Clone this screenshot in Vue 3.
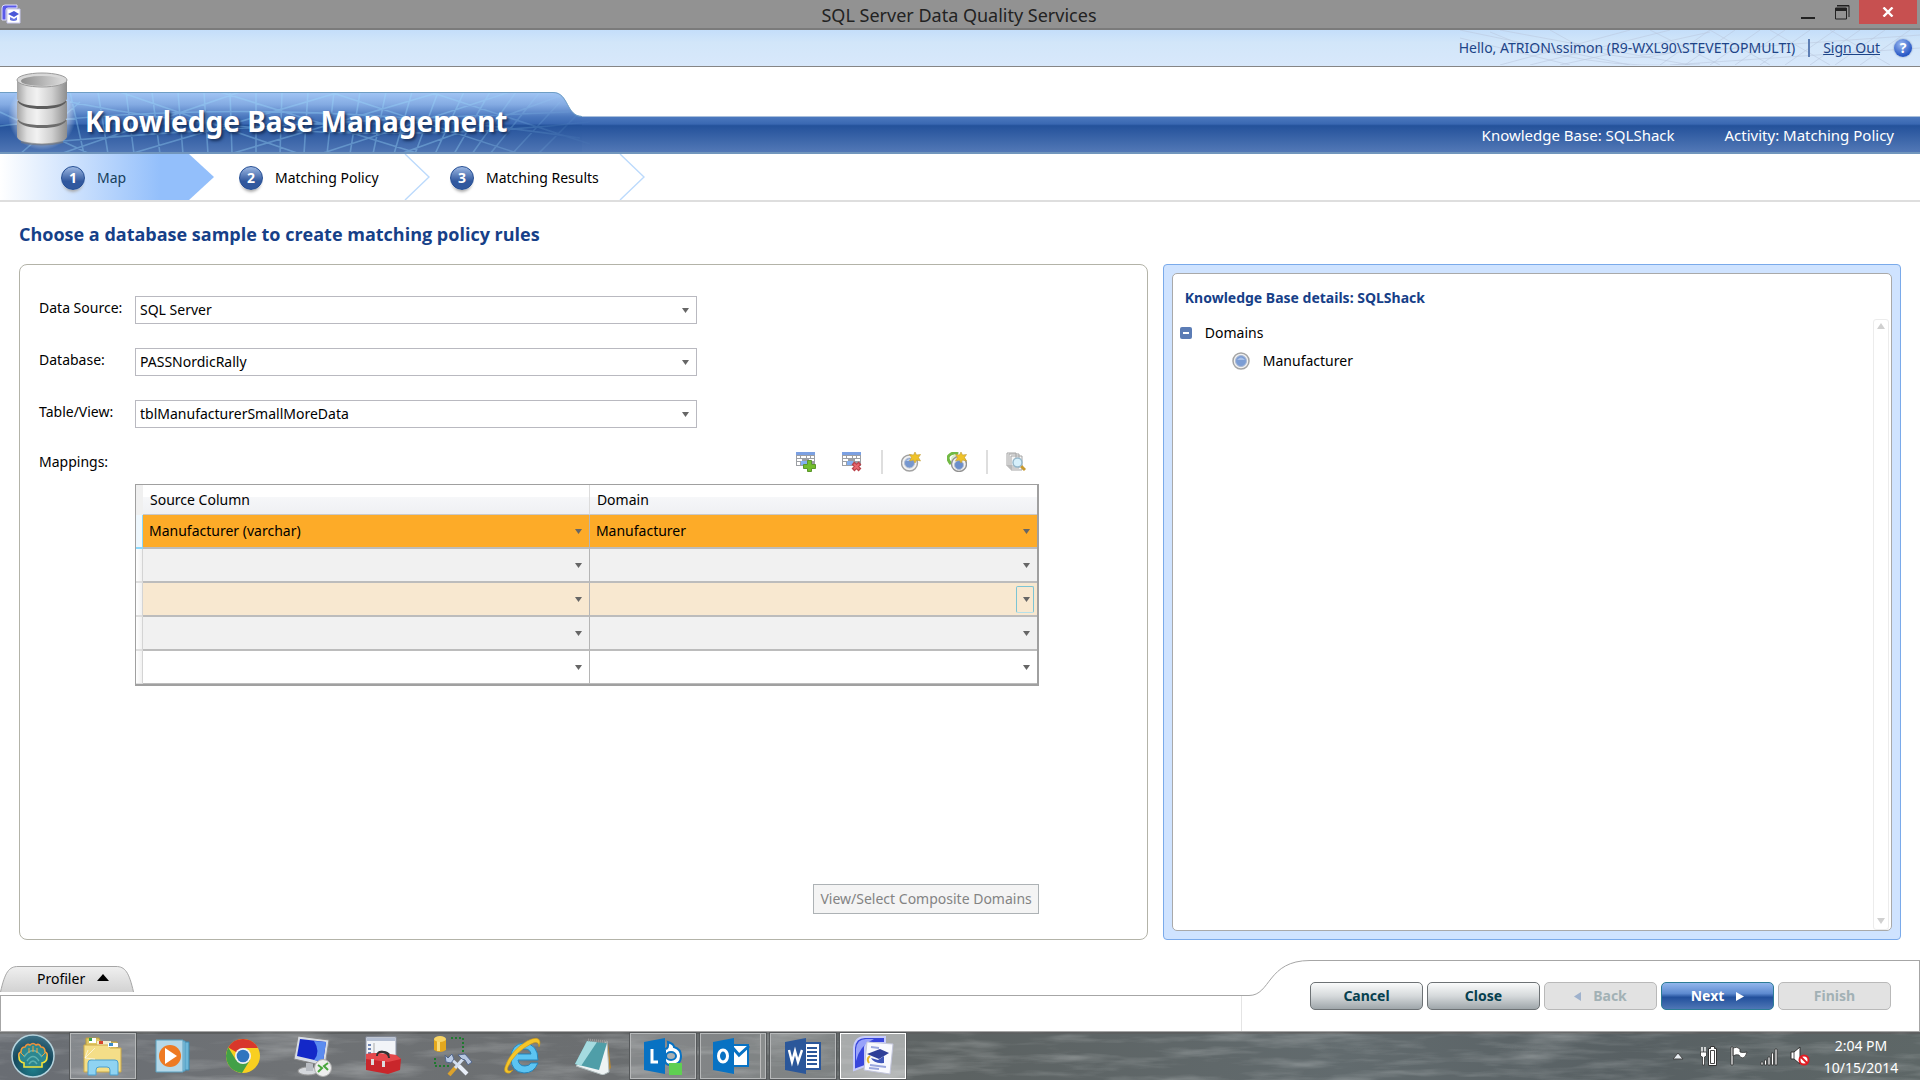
<script setup>
import { ref } from 'vue'

const steps = [
  { number: 1, label: 'Map', active: true },
  { number: 2, label: 'Matching Policy', active: false },
  { number: 3, label: 'Matching Results', active: false }
]

const fields = ref([
  { id: 'data-source', label: 'Data Source:', value: 'SQL Server' },
  { id: 'database', label: 'Database:', value: 'PASSNordicRally' },
  { id: 'table-view', label: 'Table/View:', value: 'tblManufacturerSmallMoreData' }
])

const rows = ref([
  { source: 'Manufacturer (varchar)', domain: 'Manufacturer', state: 'selected' },
  { source: '', domain: '', state: 'alt' },
  { source: '', domain: '', state: 'hover' },
  { source: '', domain: '', state: 'alt' },
  { source: '', domain: '', state: '' }
])

const expanded = ref(true)
</script>

<template>
  <div class="desktop">
    <header class="titlebar">
      <svg class="app-icon" width="20" height="20" viewBox="0 0 20 20">
        <path d="M1 16V4q0-3 3-3h12v3H7q-2 0-2 2v10z" fill="#5a5ae8" stroke="#dcdcff" />
        <path d="M6 5h13v14H6z" fill="#fff" stroke="#c8c8f0" />
        <path d="M7 10l6-3 5 3-5 3z" fill="#4a58d8" />
        <path d="M9 13v3q4 2 7 0v-3l-3 2z" fill="#6a78e0" />
      </svg>
      <h1 class="window-title">SQL Server Data Quality Services</h1>
      <div class="window-buttons">
        <button class="win-btn" aria-label="Minimize">
          <svg width="16" height="16" viewBox="0 0 16 16"><path d="M1 13h14v2H1z" fill="#222" /></svg>
        </button>
        <button class="win-btn" aria-label="Restore">
          <svg width="16" height="16" viewBox="0 0 16 16">
            <path d="M3 1.5h12V13M1.5 4h11v11h-11z" fill="none" stroke="#222" />
            <path d="M3 1h12v1.5H3zM1 4h12v3H1z" fill="#222" />
          </svg>
        </button>
        <button class="win-btn win-close" aria-label="Close window">
          <svg width="12" height="10" viewBox="0 0 12 10"><path d="M1.5 .5l9 9M10.5 .5l-9 9" stroke="#fff" stroke-width="2.4" /></svg>
        </button>
      </div>
    </header>

    <div class="userbar">
      <svg class="userbar-mesh" width="460" height="35" viewBox="0 0 460 35" aria-hidden="true">
        <path d="M0 8L110 35M0 0L170 35M40 0L230 35M40 35L170 0M70 35L210 0M100 35L250 2M30 2q90 40 210 32M90 0q80 50 150 10M200 35L250 0M225 35L275 0M250 35L300 0M275 35L325 0M300 35L350 0M325 35L375 0M350 35L400 0M375 35L425 0M400 35L450 0M190 0L260 35M250 0L310 35M310 0L370 35M370 0L430 35M180 25L460 5M210 35L460 18" fill="none" stroke="#b9c7dc" stroke-opacity=".55" />
      </svg>
      <span>Hello, ATRION\ssimon (R9-WXL90\STEVETOPMULTI)</span>
      <span class="userbar-divider"></span>
      <a href="#" class="sign-out">Sign Out</a>
      <button class="help" aria-label="Help">?</button>
    </div>

    <div class="banner">
      <svg class="banner-tab" width="600" height="62" viewBox="0 0 600 62" aria-hidden="true">
        <defs>
          <linearGradient id="tab-fill" gradientUnits="userSpaceOnUse" x1="0" y1="0" x2="0" y2="62">
            <stop offset="0" stop-color="#a3c6f5" />
            <stop offset=".2" stop-color="#84abe3" />
            <stop offset=".4" stop-color="#4b78be" />
            <stop offset=".51" stop-color="#3a68b2" />
            <stop offset=".54" stop-color="#24529b" />
            <stop offset="1" stop-color="#5278b6" />
          </linearGradient>
          <linearGradient id="fade-right" x1="0" x2="1">
            <stop offset="0" stop-color="#fff" />
            <stop offset=".75" stop-color="#fff" />
            <stop offset="1" stop-color="#000" />
          </linearGradient>
          <mask id="mesh-mask"><rect width="600" height="62" fill="url(#fade-right)" /></mask>
          <clipPath id="tab-clip"><path d="M0 0h553C569 0 566 24 582 24h18v38H0z" /></clipPath>
        </defs>
        <path d="M0 0h553C569 0 566 24 582 24V62H0z" fill="url(#tab-fill)" />
        <g clip-path="url(#tab-clip)" mask="url(#mesh-mask)">
          <path d="M70 0l14 62M98 0l10 62M126 0l8 62M152 0l8 62M178 0l5 62M204 0l4 62M230 0l2 62M256 0v62M282 0l-2 62M308 0l-4 62M334 0l-7 62M360 0l-10 62M386 0l-13 62M412 0l-18 62M438 0l-23 62M464 0l-29 62M490 0l-36 62M516 0l-44 62M540 0l-50 62M560 10l-48 52M580 20l-42 42M60 62L240 0M130 62L340 0M230 62L440 0M320 62L510 0M400 62L560 4M70 10q250 50 520 20M0 34q280 -34 580 12M50 50q240 -20 520 -30M120 0L300 62M220 0L420 62M330 0L520 62M430 0L590 52M0 20L90 62M20 62L80 10" fill="none" stroke="#9fe0ff" stroke-opacity=".34" stroke-width="1.6" />
        </g>
        <path d="M0 60h582v2H0z" fill="#7196bd" />
        <path d="M0 .5h553C569 .5 566 24.5 582 24.5" fill="none" stroke="#6f9ec4" />
      </svg>
      <svg class="db-icon" width="68" height="84" viewBox="0 3 68 84" aria-hidden="true">
        <defs>
          <linearGradient id="metal" x1="0" x2="1">
            <stop offset="0" stop-color="#a4a4a4" />
            <stop offset=".2" stop-color="#dedede" />
            <stop offset=".4" stop-color="#f2f2f2" />
            <stop offset=".7" stop-color="#cfcfcf" />
            <stop offset="1" stop-color="#8d8d8d" />
          </linearGradient>
          <linearGradient id="metal-top" x1="0" x2="1">
            <stop offset="0" stop-color="#8f8f8f" />
            <stop offset="1" stop-color="#dadada" />
          </linearGradient>
          <radialGradient id="glow">
            <stop offset=".5" stop-color="#fff" stop-opacity=".9" />
            <stop offset="1" stop-color="#fff" stop-opacity="0" />
          </radialGradient>
        </defs>
        <ellipse cx="34" cy="52" rx="34" ry="34" fill="url(#glow)" />
        <path d="M9 56v17q3 7 25 7t25-7V56z" fill="url(#metal)" />
        <path d="M10 57q5 7 24 7t24-7v-4H10z" fill="#6c6c6c" />
        <path d="M9 37v17q3 7 25 7t25-7V37z" fill="url(#metal)" />
        <path d="M10 38q5 7 24 7t24-7v-4H10z" fill="#5c5c5c" />
        <path d="M9 16v19q3 7 25 7t25-7V16z" fill="url(#metal)" />
        <ellipse cx="34" cy="16" rx="25" ry="7" fill="#d8d8d8" stroke="#9b9b9b" />
        <ellipse cx="34" cy="17" rx="21" ry="5" fill="url(#metal-top)" />
        <path d="M13 78q21 5 42 0" fill="none" stroke="#777" stroke-opacity=".6" stroke-width="2" />
      </svg>
      <div class="banner-strip">
        <h2 class="banner-title">Knowledge Base Management</h2>
        <p class="banner-info">
          <span>Knowledge Base: SQLShack</span>
          <span>Activity: Matching Policy</span>
        </p>
      </div>
    </div>

    <nav class="steps">
      <a v-for="step in steps" :key="step.number" href="#" class="step" :class="{ active: step.active }">
        <span class="step-number">{{ step.number }}</span>
        <span>{{ step.label }}</span>
        <svg class="step-arrow" width="26" height="46" viewBox="0 0 26 46" aria-hidden="true">
          <path v-if="step.active" d="M0 0l25 23L0 46z" fill="#93bffb" />
          <path v-else d="M1 0l24 23L1 46" fill="none" stroke="#bcdafc" stroke-width="1.4" />
        </svg>
      </a>
    </nav>

    <main class="content">
      <h3 class="page-heading">Choose a database sample to create matching policy rules</h3>
      <div class="panels">
        <section class="form-panel">
          <div v-for="field in fields" :key="field.id" class="field">
            <label :for="field.id">{{ field.label }}</label>
            <select :id="field.id" class="dropdown">
              <option>{{ field.value }}</option>
            </select>
          </div>

          <div class="mappings-head">
            <span>Mappings:</span>
            <div class="toolbar">
              <button class="tool" aria-label="Add mapping">
                <svg width="20" height="20" viewBox="0 0 20 20">
                  <path d="M0 0h19v14H0z" fill="#9c9fa4" />
                  <path d="M0 0h19v3H0z" fill="#7ba0e2" />
                  <path d="M1 4h3v2H1zM5 4h5v2H5zM11 4h3v2h-3zM15 4h3v2h-3zM1 7h5v2H1zM13 7h5v2h-5zM1 10h3v3H1zM11 10h5v3h-5z" fill="#fff" />
                  <path d="M5 9h6v4H5z" fill="#83aff0" />
                  <path d="M11.5 8.5h4v4h4v4h-4v3h-4v-3h-4v-4h4z" fill="#72bd2c" stroke="#5b962c" />
                </svg>
              </button>
              <button class="tool" aria-label="Remove mapping">
                <svg width="20" height="20" viewBox="0 0 20 20">
                  <path d="M0 0h19v14H0z" fill="#9c9fa4" />
                  <path d="M0 0h19v3H0z" fill="#7ba0e2" />
                  <path d="M1 4h3v2H1zM5 4h5v2H5zM11 4h3v2h-3zM15 4h3v2h-3zM1 7h5v2H1zM13 7h5v2h-5zM1 10h3v3H1z" fill="#fff" />
                  <path d="M5 9h6v4H5z" fill="#83aff0" />
                  <path d="M11 11l7 7M18 11l-7 7" stroke="#b94048" stroke-width="4" />
                  <path d="M12 12l5 5M17 12l-5 5" stroke="#e8666c" stroke-width="2" />
                </svg>
              </button>
              <span class="tool-separator"></span>
              <button class="tool" aria-label="Create a domain">
                <svg width="20" height="20" viewBox="0 0 20 20">
                  <circle cx="8.500" cy="11" r="8" fill="#f2f2f2" stroke="#a2a2a2" stroke-width="1.4" />
                  <circle cx="8.500" cy="11" r="5" fill="#7697cf" stroke="#b4bfd3" />
                  <path d="M5 9q3-4 7 0z" fill="#b9cdec" />
                  <path d="M14 0l1.5 3 4-.5-2 3 2 3.500-4-1L14 11l-1.500-3-4 1 2-3.500-2-3 4 .5z" fill="#efc229" stroke="#c09a35" stroke-width=".6" />
                </svg>
              </button>
              <button class="tool" aria-label="Create a composite domain">
                <svg width="20" height="20" viewBox="0 0 20 20">
                  <path d="M4 12Q-2 5 4 2q4-2 7 0" fill="none" stroke="#72b944" stroke-width="3" />
                  <path d="M6 10Q3 5 9 3" fill="none" stroke="#d9efca" stroke-width="2" />
                  <circle cx="12" cy="12" r="7.500" fill="#f2f2f2" stroke="#929292" stroke-width="1.4" />
                  <circle cx="12" cy="13" r="4.500" fill="#6b8ecb" stroke="#b4bfd3" />
                  <path d="M14 0l1.5 3 4-.5-2 3 2 3.500-4-1L14 11l-1.500-3-4 1 2-3.500-2-3 4 .5z" fill="#efc229" stroke="#c09a35" stroke-width=".6" />
                </svg>
              </button>
              <span class="tool-separator"></span>
              <button class="tool" aria-label="Preview data source">
                <svg width="20" height="20" viewBox="0 0 20 20">
                  <path d="M1 1h9v13H1zM3 2h10v14H3zM5 4h11v14H5z" fill="#f6f6f6" stroke="#a5a5a5" />
                  <path d="M15 14l4 4" stroke="#c99a2e" stroke-width="3" />
                  <circle cx="11.500" cy="10.500" r="4.500" fill="#d6f0fb" stroke="#94b7ca" stroke-width="1.4" />
                </svg>
              </button>
            </div>
          </div>

          <table class="grid">
            <colgroup>
              <col class="gutter-col" />
              <col />
              <col />
            </colgroup>
            <thead>
              <tr>
                <th class="gutter"></th>
                <th>Source Column</th>
                <th>Domain</th>
              </tr>
            </thead>
            <tbody>
              <tr v-for="(row, i) in rows" :key="i" :class="row.state">
                <td class="gutter"></td>
                <td>
                  <select class="cell-select" :aria-label="`Source column, row ${i + 1}`">
                    <option>{{ row.source }}</option>
                  </select>
                </td>
                <td>
                  <select class="cell-select" :aria-label="`Domain, row ${i + 1}`">
                    <option>{{ row.domain }}</option>
                  </select>
                  <span v-if="row.state === 'hover'" class="arrow-focus"></span>
                </td>
              </tr>
            </tbody>
          </table>

          <button class="composite-btn" disabled>View/Select Composite Domains</button>
        </section>

        <aside class="details-panel">
          <div class="details-inner">
            <h4 class="details-title">Knowledge Base details: SQLShack</h4>
            <div class="details-body">
              <div class="tree">
                <div class="tree-row">
                  <button class="tree-toggle" aria-label="Toggle domains" @click="expanded = !expanded">
                    <svg width="12" height="12" viewBox="0 0 12 12">
                      <rect width="12" height="12" rx="2" fill="#5b7cb5" />
                      <path d="M3 5h6v2H3z" fill="#fff" />
                    </svg>
                  </button>
                  <span>Domains</span>
                </div>
                <div v-if="expanded" class="tree-row tree-child">
                  <svg width="18" height="18" viewBox="0 0 18 18" aria-hidden="true">
                    <circle cx="9" cy="9" r="8" fill="#f1f1f1" stroke="#a4a4a4" stroke-width="1.5" />
                    <circle cx="9" cy="9" r="5.5" fill="#7c9dd4" stroke="#aab9d4" />
                    <path d="M5 8q4-5 8 0z" fill="#a9c1e8" />
                  </svg>
                  <span>Manufacturer</span>
                </div>
              </div>
              <div class="scrollbar">
                <svg width="8" height="6" viewBox="0 0 8 6"><path d="M4 0l4 6H0z" fill="#d0d0d0" /></svg>
                <svg width="8" height="6" viewBox="0 0 8 6"><path d="M0 0h8L4 6z" fill="#d0d0d0" /></svg>
              </div>
            </div>
          </div>
        </aside>
      </div>
    </main>

    <footer class="footer">
      <div class="footer-left">
        <button class="profiler">
          <svg class="profiler-shape" width="134" height="26" viewBox="0 0 134 26" aria-hidden="true">
            <defs>
              <linearGradient id="profiler-fill" x1="0" y1="0" x2="0" y2="1">
                <stop offset="0" stop-color="#f0f0f0" />
                <stop offset="1" stop-color="#d2d2d2" />
              </linearGradient>
            </defs>
            <path d="M.5 26C5 6 9 .5 18 .5h98C125 .5 129 6 133.500 26" fill="url(#profiler-fill)" stroke="#a6a6a6" />
          </svg>
          <span>Profiler</span>
          <svg class="profiler-arrow" width="12" height="7" viewBox="0 0 12 7"><path d="M6 0l6 7H0z" fill="#000" /></svg>
        </button>
        <div class="footer-tray"></div>
      </div>
      <svg class="footer-curve" width="69" height="72" viewBox="0 0 69 72" aria-hidden="true">
        <path d="M0 35.500h8C30 35.500 26 .5 69 .5" fill="none" stroke="#a6a6a6" />
        <path d="M.5 36v35" stroke="#e4e4e4" />
        <path d="M0 71.500h69" stroke="#a6a6a6" />
      </svg>
      <div class="footer-actions">
        <button class="action">Cancel</button>
        <button class="action">Close</button>
        <button class="action" disabled>
          <svg width="7" height="9" viewBox="0 0 7 9"><path d="M7 0v9L0 4.500z" fill="#9fb2cd" /></svg>
          Back
        </button>
        <button class="action primary">
          Next
          <svg width="8" height="9" viewBox="0 0 8 9"><path d="M0 0v9l8-4.500z" fill="#fff" /></svg>
        </button>
        <button class="action" disabled>Finish</button>
      </div>
    </footer>

    <div class="taskbar">
      <svg class="taskbar-water" width="100%" height="48" aria-hidden="true">
        <defs>
          <filter id="water" x="0" y="0" width="100%" height="100%">
            <feTurbulence type="fractalNoise" baseFrequency=".012 .09" numOctaves="4" seed="4" />
            <feColorMatrix values="0 0 0 0 .82  0 0 0 0 .84  0 0 0 0 .84  1.8 0 0 0 -.8" />
          </filter>
        </defs>
        <rect width="100%" height="48" filter="url(#water)" opacity=".35" />
      </svg>
      <div class="task-items">
        <button class="task start" aria-label="Start">
          <svg width="46" height="46" viewBox="0 0 46 46">
            <defs>
              <radialGradient id="orb" cx=".5" cy=".8" r=".8">
                <stop offset="0" stop-color="#1f7f8c" />
                <stop offset=".6" stop-color="#17495d" />
                <stop offset="1" stop-color="#3f7388" />
              </radialGradient>
              <linearGradient id="shell" x1="0" y1="0" x2="0" y2="1">
                <stop offset="0" stop-color="#f08c3a" />
                <stop offset=".5" stop-color="#f3a83c" />
                <stop offset=".6" stop-color="#f2e13a" />
              </linearGradient>
            </defs>
            <circle cx="23" cy="23" r="21" fill="url(#orb)" stroke="#b5d3dd" stroke-width="1.5" />
            <path d="M14 34v-4q-5-1-5-6-1-4 2-5 0-5 4-5 2-4 5-2 3-3 6 0 3-2 5 2 4 0 4 5 3 1 2 5 0 5-5 6v4z" fill="#2c8790" stroke="url(#shell)" stroke-width="1.6" />
            <path d="M14 24q9-13 18 0M17 28q6-9 12 0M19 31q4-6 8 0" fill="none" stroke="#5eb1b0" stroke-width="1.4" />
            <path d="M19 20v-5M23 19v-6M27 20v-5M14 23l-3-3M32 23l3-3" stroke="#f0a23c" />
          </svg>
        </button>
        <button class="task open" aria-label="File Explorer">
          <svg width="44" height="42" viewBox="0 0 44 42">
            <path d="M5 3h13l2 4h16v12H5z" fill="#e0c763" stroke="#b89b3e" />
            <path d="M8 3h7v5H8z" fill="#fff" /><path d="M8 3h3v3H8z" fill="#35a048" />
            <path d="M16 6h14v8H16z" fill="#f2eccd" /><path d="M18 6h4v3h-4z" fill="#d8452c" />
            <path d="M3 10h24l2 3h11v24H3z" fill="#f4de88" stroke="#cdaa49" />
            <path d="M27 8h10v4H27z" fill="#fff" /><path d="M28 8h4v3h-4z" fill="#3c8cc9" />
            <path d="M7 40V28q0-3 3-3h24q3 0 3 3v12h-8v-5q0-3-3-3h-8q-3 0-3 3v5z" fill="#8fd3f2" stroke="#4b9fce" />
            <path d="M4 23L14 13M4 23l10 1M4 23l3-8" stroke="#fff" stroke-opacity=".6" />
          </svg>
        </button>
        <button class="task" aria-label="Media Player">
          <svg width="36" height="36" viewBox="0 0 36 36">
            <path d="M10 4h24v28H10z" fill="#6eb7d8" stroke="#3d86ac" /><path d="M6 3h24v30H6z" fill="#8cc7e2" stroke="#4f99be" />
            <path d="M1 2h27v32H1z" fill="#b5d8e8" stroke="#5aa0c0" />
            <circle cx="15" cy="18" r="11" fill="#ee7a23" /><path d="M10 10v16l12-8z" fill="#fff" />
          </svg>
        </button>
        <button class="task" aria-label="Chrome">
          <svg width="36" height="36" viewBox="0 0 36 36">
            <circle cx="18" cy="18" r="17" fill="#f8cf20" />
            <path d="M18 18L3.300 9.500A17 17 0 0 1 33 10H18z" fill="#d8372b" />
            <path d="M3.300 9.500A17 17 0 0 0 17 35l8-13-7-4-7 4z" fill="#43a047" />
            <circle cx="18" cy="18" r="8" fill="#f2f2f2" /><circle cx="18" cy="18" r="6.300" fill="#2f75bf" />
          </svg>
        </button>
        <button class="task" aria-label="Remote Desktop">
          <svg width="40" height="42" viewBox="0 0 40 42">
            <ellipse cx="15" cy="36" rx="10" ry="4" fill="#d5d8dc" stroke="#999" /><path d="M13 28h7v8h-7z" fill="#b8bcc2" />
            <path d="M5 1l31 4-4 26L1 24z" fill="#d8dde4" stroke="#888" /><path d="M7 4l26 3-3 20L4 21z" fill="#1328c8" />
            <path d="M21 6l12 1-3 20-9-2q7-8 0-19z" fill="#5b8cf0" />
            <circle cx="30" cy="33" r="8.500" fill="#eee" stroke="#aaa" /><path d="M25 30l4 3-4 4M35 28l-4 3 4 4" fill="none" stroke="#49a63d" stroke-width="2" />
          </svg>
        </button>
        <button class="task" aria-label="Toolbox">
          <svg width="38" height="40" viewBox="0 0 38 40">
            <path d="M2 1h30v26H2z" fill="#f2f4f8" stroke="#8c95a8" /><path d="M3 2h28v3H3z" fill="#b3bed2" /><path d="M4 9h3M4 13h3M4 17h3" stroke="#6f86b5" stroke-width="2" /><path d="M10 7v18" stroke="#aaa" />
            <path d="M14 20q0-5 6-4t6 6" fill="none" stroke="#333" stroke-width="2" />
            <path d="M2 18l10-1 20 2 5 4-1 11-12 4L2 34z" fill="#c9262b" />
            <path d="M2 18l10-1 20 2 5 4-13 3L2 23z" fill="#e5484b" />
            <path d="M13 20q0-5 6-4t6 6" fill="none" stroke="#333" stroke-width="2" />
            <path d="M7 23h3v6H7zM18 25h3v6h-3z" fill="#ddd" />
          </svg>
        </button>
        <button class="task" aria-label="Configuration Manager">
          <svg width="40" height="42" viewBox="0 0 40 42">
            <path d="M1 4v11q6 4 12 0V4z" fill="#e4a81e" /><path d="M4 5h3v11H4z" fill="#f9dc7c" /><ellipse cx="7" cy="4" rx="6" ry="3" fill="#f8d465" />
            <path d="M18 3h12v14M2 23v8h14" fill="none" stroke="#1f7a2e" stroke-width="2" stroke-dasharray="2 2" />
            <path d="M16 40l7-8" stroke="#dca22c" stroke-width="4" /><path d="M22 33l8-9" stroke="#d4dff0" stroke-width="3" />
            <path d="M17 23l10 9" stroke="#d4dff0" stroke-width="3" /><path d="M26 31l8 8" stroke="#e8eef8" stroke-width="4" />
            <path d="M12 20l3 3 4-4 2 5-3 4-5-1zM25 20l7-1 7 8-4 3-3-5-3-1z" fill="#b8c8e2" stroke="#53678c" />
          </svg>
        </button>
        <button class="task" aria-label="Internet Explorer">
          <svg width="40" height="40" viewBox="0 0 40 40">
            <path d="M35 24H15q1 6 7 6 4 0 6-3h7q-4 10-14 10Q8 36 8 22 8 8 21 7q14 1 14 17zM15 18h13q-1-5-6-5-6 0-7 5z" fill="#5cc4f2" stroke="#2485bd" />
            <path d="M7 37Q0 38 2 31 7 15 24 5q12-6 13 1 0 2-1 5 0-7-8-3Q12 16 5 31q-2 6 5 3z" fill="#f6c629" stroke="#c6921a" stroke-width=".6" />
          </svg>
        </button>
        <button class="task" aria-label="Notepad">
          <svg width="38" height="38" viewBox="0 0 38 38">
            <path d="M34 6l3 25-6 5z" fill="#b58535" /><path d="M33 4l2 31-6 3L2 29z" fill="#eef3f4" stroke="#adb9bb" />
            <path d="M13 4l20 2-8 27L1 27z" fill="#4f9ea8" /><path d="M13 4l10 1L7 29l-6-2z" fill="#a5dbe0" />
            <path d="M14 3l19 2" stroke="#999" stroke-width="3" stroke-dasharray="1 1" />
          </svg>
        </button>
        <button class="task open" aria-label="Lync">
          <svg width="40" height="40" viewBox="0 0 40 40">
            <path d="M22 13q4 0 3-7 6 2 6 5 7 2 7 9 0 9-10 9-6 0-6-5z" fill="#fff" stroke="#0872c3" stroke-width="2" />
            <ellipse cx="28" cy="20" rx="5" ry="4" fill="#a9b0b3" stroke="#0872c3" stroke-width="2" />
            <path d="M1 6l21-4v36L1 34z" fill="#0872c3" /><path d="M9 13v13h6" fill="none" stroke="#fff" stroke-width="3" />
            <path d="M26 27h13v12H26z" fill="#5fcf52" />
          </svg>
        </button>
        <button class="task open stacked" aria-label="Outlook">
          <svg width="38" height="40" viewBox="0 0 38 40">
            <path d="M20 9h16v21H20z" fill="#fff" stroke="#0872c3" stroke-width="2" /><path d="M20 11l7 8 10-9" fill="none" stroke="#0872c3" stroke-width="3" />
            <path d="M1 6l21-4v36L1 34z" fill="#0872c3" /><ellipse cx="11" cy="20" rx="4.500" ry="6" fill="none" stroke="#fff" stroke-width="3" />
          </svg>
        </button>
        <button class="task open" aria-label="Word">
          <svg width="38" height="40" viewBox="0 0 38 40">
            <path d="M20 7h16v26H20z" fill="#fff" stroke="#2b579a" stroke-width="2" /><path d="M23 12h10M23 16h10M23 20h10M23 24h10M23 28h10" stroke="#2b579a" stroke-width="2" />
            <path d="M1 6l21-4v36L1 34z" fill="#2b579a" /><path d="M5 14l3 12 3-11 3 11 4-12" fill="none" stroke="#fff" stroke-width="2.4" />
          </svg>
        </button>
        <button class="task open current" aria-label="Data Quality Client">
          <svg width="42" height="42" viewBox="0 0 42 42">
            <path d="M2 35V13Q3 2 13 2h20v6H17q-4 1-4 5v18z" fill="#3846dc" stroke="#c6cbfb" stroke-width="2" /><path d="M4 14Q5 4 14 4h8Q8 10 4 26z" fill="#98a2fa" />
            <path d="M15 7l26 2-3 30-26-4z" fill="#f8f9fe" stroke="#c3c6dc" /><path d="M19 12l8 1M18 30l16 2M17 33l10 1" stroke="#9aa7de" stroke-width="2" />
            <path d="M15 19l13-5 9 4-10 6z" fill="#2f3f98" /><path d="M19 23q3 6 13 5v-7l-6 4z" fill="#3f56b8" /><path d="M18 21q-4 3-1 7" fill="none" stroke="#e6b830" stroke-width="2" />
          </svg>
        </button>
      </div>
      <div class="tray">
        <svg class="tray-more" width="12" height="8" viewBox="0 0 12 8"><path d="M6 1l5 6H1z" fill="#e8edf2" stroke="#444" /></svg>
        <svg width="18" height="20" viewBox="0 0 18 20">
          <path d="M2 1v5M5 1v5" stroke="#fff" stroke-width="1.4" />
          <path d="M.5 6h6v4l-2 1v8h-2v-8l-2-1z" fill="#fff" stroke="#333" stroke-width=".8" />
          <path d="M8.500 2.500h2V.5h4v2h2v17h-8z" fill="#fff" stroke="#333" /><path d="M10.500 4.500h4v13h-4z" fill="#fff" stroke="#444" />
        </svg>
        <svg width="18" height="20" viewBox="0 0 18 20"><path d="M1 1h2v18H1zM3 2q4-2 7 1v3q3 1 7 0-1 5-4 6-3 0-4-3-3-1-6 1z" fill="#fff" stroke="#333" stroke-width=".8" /></svg>
        <svg width="18" height="20" viewBox="0 0 18 20"><path d="M1 16h2v3H1zM4.500 14h2v5h-2zM8 11h2v8H8zM11.500 7h2v12h-2zM15 3h2v16h-2z" fill="#fff" stroke="#333" stroke-width=".8" /></svg>
        <svg width="20" height="20" viewBox="0 0 20 20">
          <path d="M1 6h3l6-5v17l-6-5H1z" fill="#fff" stroke="#333" /><path d="M4 6v7" stroke="#555" />
          <circle cx="14" cy="14" r="4.500" fill="#fff" stroke="#e01b22" stroke-width="2" /><path d="M11 11l6 6" stroke="#e01b22" stroke-width="2" />
        </svg>
        <p class="clock"><span>2:04 PM</span><span>10/15/2014</span></p>
      </div>
    </div>
  </div>
</template>

<style>
body {
  margin: 0;
  background: #fff;
}
</style>

<style scoped>
.desktop {
  display: flex;
  flex-direction: column;
  min-height: 100vh;
  font-family: "Noto Sans", "Open Sans", sans-serif;
  font-size: 14px;
  line-height: 20px;
  color: #000;
}

h1, h2, h3, h4, p {
  margin: 0;
}

button, select {
  font: inherit;
  color: inherit;
}

button {
  padding: 0;
  border: 0;
  background: none;
}

svg {
  display: block;
  flex: none;
}

.titlebar {
  display: grid;
  grid-template-columns: 1fr auto 1fr;
  align-items: center;
  height: 28px;
  padding: 0 3px 0 1px;
  background: #929292;
  border-bottom: 2px solid #7b7b7b;
}

.window-title {
  padding-top: 2px;
  font-size: 18px;
  font-weight: 400;
  color: #222;
}

.window-buttons {
  display: flex;
  justify-content: flex-end;
  align-self: start;
}

.win-btn {
  display: flex;
  align-items: center;
  justify-content: center;
  width: 34px;
  height: 24px;
}

.win-close {
  width: 58px;
  background: #c75050;
}

.userbar {
  position: relative;
  display: flex;
  align-items: center;
  justify-content: flex-end;
  height: 36px;
  padding-right: 8px;
  color: #1d4488;
  background: linear-gradient(#c4defa, #d2e6f9 35%, #d8e8fb);
  border-bottom: 1px solid #858585;
}

.userbar-mesh {
  position: absolute;
  top: 0;
  right: 0;
}

.userbar > span, .userbar > a, .userbar > button {
  position: relative;
}

.userbar-divider {
  width: 2px;
  height: 18px;
  margin: 0 13px;
  background: #5d7fb5;
}

.sign-out {
  color: #1d4488;
}

.help {
  width: 18px;
  height: 18px;
  margin-left: 14px;
  border-radius: 9px;
  color: #fff;
  font-weight: 700;
  line-height: 18px;
  background: radial-gradient(circle at 40% 30%, #9cb9f0, #2757c5 70%);
  box-shadow: 0 0 2px #7a8eb5;
}

.banner {
  position: relative;
  padding-top: 49px;
}

.banner-tab {
  position: absolute;
  left: 0;
  top: 25px;
}

.banner-strip {
  display: flex;
  align-items: center;
  justify-content: space-between;
  box-sizing: border-box;
  height: 38px;
  padding: 0 26px 0 85px;
  background: linear-gradient(#4b78be, #3a68b2 20%, #24529b 25%, #5278b6);
  border-top: 1px solid #a9bfdc;
  border-bottom: 2px solid #7196bd;
}

.banner-title {
  position: relative;
  margin-top: -28px;
  color: #fff;
  font-size: 28px;
  line-height: 36px;
  text-shadow: 2px 2px 3px #17305c;
}

.banner-info {
  display: flex;
  gap: 50px;
  color: #fff;
  font-size: 15px;
}

.db-icon {
  position: absolute;
  left: 8px;
  top: 0;
}

.steps {
  display: flex;
  height: 46px;
  border-bottom: 2px solid #dedede;
}

.step {
  position: relative;
  display: flex;
  align-items: center;
  gap: 12px;
  box-sizing: border-box;
  width: 215px;
  padding: 2px 0 0 24px;
  color: #000;
  text-decoration: none;
}

.step + .step + .step {
  padding-left: 20px;
}

.step.active {
  padding-left: 61px;
  color: #173f5c;
  background: linear-gradient(90deg, #fff, #93bffb 85%) no-repeat 0 0 / 189px 100%;
}

.step-number {
  width: 22px;
  height: 22px;
  border: 1px solid #264f94;
  border-radius: 12px;
  color: #fff;
  font-weight: 700;
  line-height: 22px;
  text-align: center;
  background: linear-gradient(#9cb7e2, #31589e 65%);
  box-shadow: 0 4px 3px -2px #aaa;
}

.step-arrow {
  position: absolute;
  right: 0;
  top: 0;
}

.content {
  display: flex;
  flex: 1;
  flex-direction: column;
  padding: 20px 19px;
}

.page-heading {
  color: #164088;
  font-family: "Open Sans", "Noto Sans", sans-serif;
  font-size: 18px;
  line-height: 24px;
}

.panels {
  display: grid;
  flex: 1;
  grid-template-columns: 1130fr 739fr;
  gap: 15px;
  margin-top: 18px;
}

.form-panel {
  display: flex;
  flex-direction: column;
  padding: 31px 108px 25px 19px;
  border: 1px solid #b3b3a8;
  border-radius: 8px;
}

.field {
  display: grid;
  grid-template-columns: 96px minmax(0, 562px);
  margin-bottom: 24px;
}

.field label {
  padding-top: 2px;
}

.dropdown, .cell-select {
  appearance: none;
  box-sizing: border-box;
  width: 100%;
  border-radius: 0;
  background: #fff url("data:image/svg+xml,%3Csvg xmlns='http://www.w3.org/2000/svg' width='7' height='5'%3E%3Cpath d='M0 0h7L3.5 5z' fill='%23666'/%3E%3C/svg%3E") no-repeat right 7px center;
}

.dropdown {
  height: 28px;
  padding: 0 28px 0 4px;
  border: 1px solid #b9b9c0;
}

.mappings-head {
  display: flex;
  align-items: flex-start;
  justify-content: space-between;
  height: 24px;
  padding-right: 13px;
}

.toolbar {
  display: flex;
  align-items: center;
  height: 20px;
}

.tool {
  width: 20px;
  height: 20px;
  margin-right: 26px;
}

.tool:last-child {
  margin-right: 0;
}

.tool-separator {
  width: 2px;
  height: 24px;
  margin-left: -7px;
  margin-right: 18px;
  background: #dedede;
}

.grid {
  width: calc(100% - 96px);
  margin: 8px 0 0 96px;
  border: 1px solid #a0a0a0;
  border-right-width: 2px;
  border-bottom-width: 2px;
  border-collapse: separate;
  border-spacing: 0;
  table-layout: fixed;
}

.gutter-col {
  width: 7px;
}

.grid th {
  height: 29px;
  padding: 0 0 0 7px;
  border-right: 1px solid #dcdcdc;
  border-bottom: 1px solid #c9c9c9;
  font-weight: 400;
  text-align: left;
  background: linear-gradient(#fff 40%, #f6f7f9 41%, #eff0f3);
}

.grid td {
  position: relative;
  height: 32px;
  padding: 0;
  border-right: 1px solid #b5b5b5;
  border-bottom: 2px solid #bcbcbc;
}

.grid th:last-child, .grid td:last-child {
  border-right: 0;
}

.grid tr:last-child td {
  border-bottom-width: 1px;
}

.grid th.gutter {
  padding: 0;
  border-color: #f0f0f0;
  background: #f0f0f0;
}

.grid td.gutter {
  border-right-color: #d4d4d4;
  border-bottom-color: #dedede;
  background: linear-gradient(90deg, #fff, #f1f1f1);
}

.grid .selected td.gutter {
  border-color: #8ad7fb;
  background: #eef7fd;
}

.selected td {
  background: #fdab28;
}

.alt td {
  background: #f1f1f1;
}

.hover td {
  background: #f8e8d0;
}

.cell-select {
  display: block;
  height: 32px;
  padding: 0 28px 0 6px;
  border: 0;
  background-color: transparent;
}

.arrow-focus {
  position: absolute;
  top: 3px;
  right: 3px;
  width: 16px;
  height: 25px;
  border: 1px solid #7cc4d4;
  border-bottom-color: #b5e0ea;
  border-radius: 2px;
  pointer-events: none;
}

.composite-btn {
  align-self: flex-end;
  height: 30px;
  margin-top: auto;
  padding: 0 6px;
  border: 1px solid #adb2b5;
  color: #838383;
  background: #f4f4f4;
}

.details-panel {
  display: flex;
  padding: 8px;
  border: 1px solid #7aaaea;
  border-radius: 4px;
  background: #cfe3ff;
}

.details-inner {
  display: flex;
  flex: 1;
  flex-direction: column;
  border: 1px solid #a9a9a9;
  border-radius: 5px;
  background: #fff;
}

.details-title {
  padding: 14px 12px 11px;
  color: #164088;
  font-size: 14px;
}

.details-body {
  display: flex;
  flex: 1;
  justify-content: space-between;
}

.tree {
  padding-left: 7px;
}

.tree-row {
  display: flex;
  align-items: center;
  gap: 13px;
  height: 28px;
}

.tree-child {
  padding-left: 52px;
}

.scrollbar {
  display: flex;
  flex-direction: column;
  align-items: center;
  justify-content: space-between;
  width: 14px;
  margin-right: 2px;
  padding: 3px 0 5px;
  border: 1px solid #ececec;
  border-radius: 3px;
}

.footer {
  display: flex;
  align-items: flex-end;
  height: 72px;
}

.footer-left {
  flex: 1;
}

.profiler {
  position: relative;
  display: flex;
  align-items: center;
  gap: 12px;
  height: 26px;
  margin-bottom: 3px;
  padding-left: 37px;
}

.profiler-shape {
  position: absolute;
  left: 0;
  top: 0;
}

.profiler span {
  position: relative;
}

.profiler-arrow {
  position: relative;
  margin-bottom: 4px;
}

.footer-tray {
  height: 35px;
  border: 1px solid #a6a6a6;
  border-right: 0;
}

.footer-actions {
  display: flex;
  align-items: center;
  gap: 4px;
  box-sizing: border-box;
  height: 72px;
  padding-right: 28px;
  border: 1px solid #a6a6a6;
  border-left: 0;
}

.action {
  display: flex;
  align-items: center;
  justify-content: center;
  gap: 12px;
  box-sizing: border-box;
  width: 113px;
  height: 28px;
  border: 1px solid #6d7275;
  border-radius: 5px;
  color: #06404f;
  font-weight: 700;
  background: linear-gradient(#fafbfb, #d5d9db 50%, #9fa6aa);
}

.action:disabled {
  border-color: #b9b9b9;
  color: #a2b1b5;
  background: #e2e2e2;
}

.action.primary {
  border-color: #2c7c96;
  color: #fff;
  background: linear-gradient(#92b6ec, #5e8bd0 40%, #22509c 55%, #4f77b6);
}

.taskbar {
  position: relative;
  display: flex;
  align-items: center;
  justify-content: space-between;
  height: 48px;
  background: linear-gradient(90deg, #696d73, #6f7275 15%, #6b6e70 32%, #5c6262 50%, #626b6e 70%, #586063 85%, #5e6767);
  box-shadow: inset 0 2px #5d5f60;
}

/* rippled desktop showing through the translucent bar */
.taskbar-water {
  position: absolute;
  left: 0;
  top: 0;
}

.task-items {
  position: relative;
  display: flex;
  align-items: center;
  gap: 4px;
}

.task {
  display: flex;
  align-items: center;
  justify-content: center;
  box-sizing: border-box;
  width: 66px;
  height: 46px;
}

.task.open {
  border: 1px solid #b7b9ba;
  outline: 1px solid #55585a;
  background: #ffffff2e;
}

.task.stacked {
  padding-right: 5px;
  box-shadow: inset -4px 0 #8b8e8e, inset -5px 0 #bbb;
}

.task.current {
  border-color: #fff;
  background: #ffffff73;
}

.tray {
  position: relative;
  display: flex;
  align-items: center;
  gap: 12px;
  padding-right: 20px;
}

.tray-more {
  margin-right: 4px;
}

.clock {
  display: flex;
  flex-direction: column;
  width: 78px;
  padding-top: 2px;
  color: #fff;
  line-height: 22px;
  text-align: center;
}
</style>
